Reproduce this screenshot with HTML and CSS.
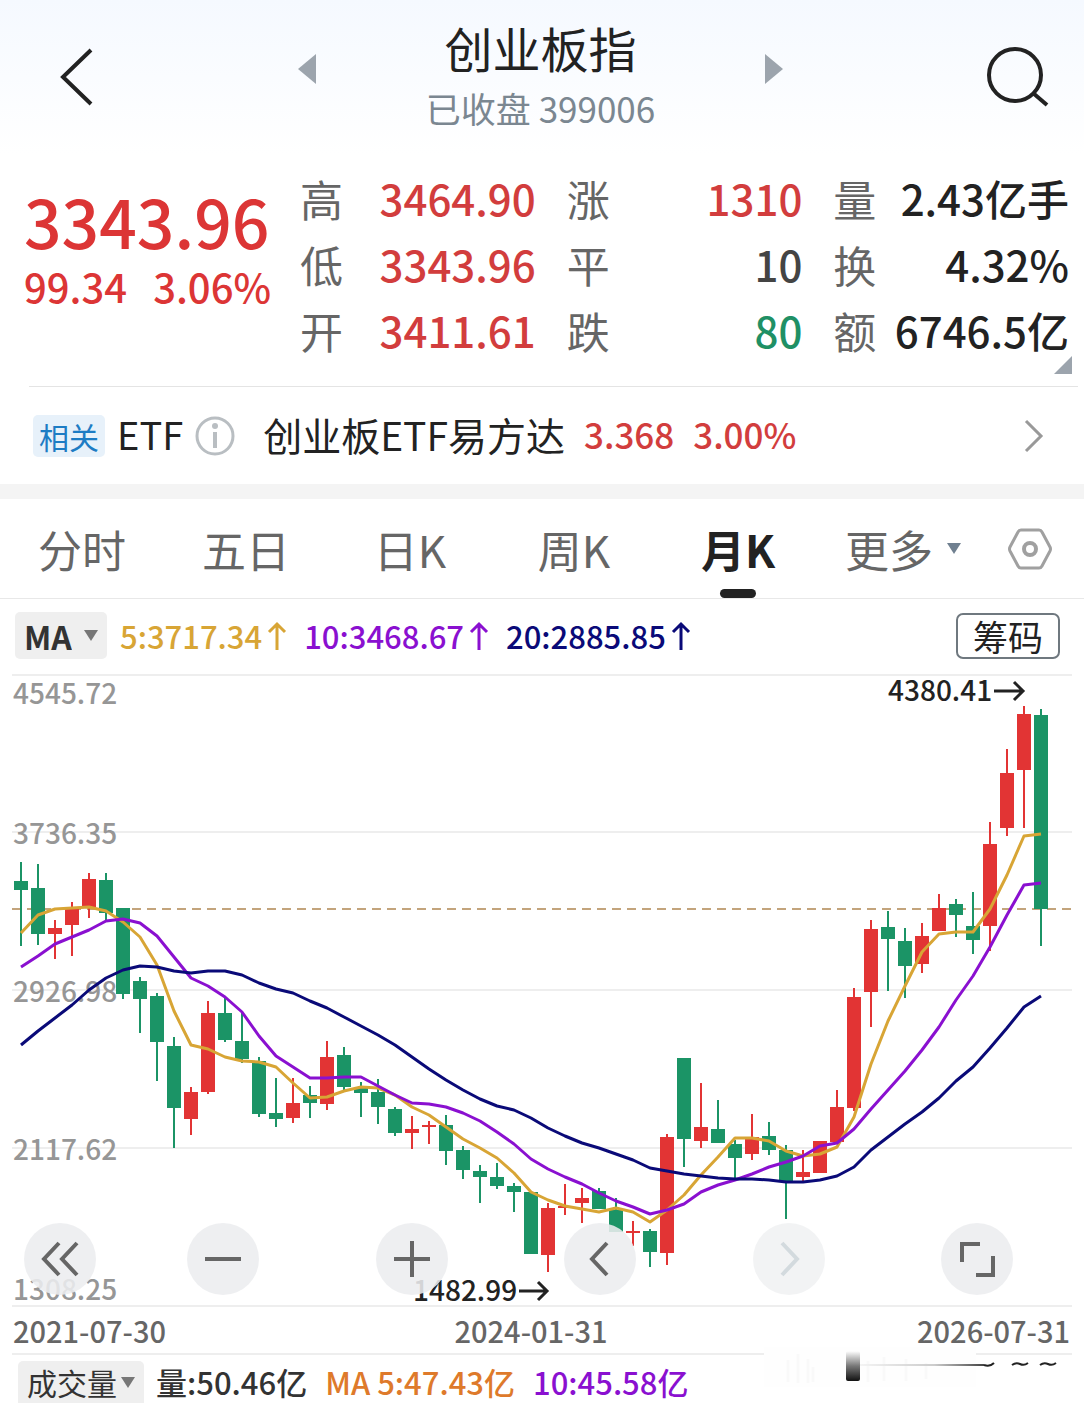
FILE: index.html
```
<!DOCTYPE html>
<html lang="zh-CN">
    <head>
        <meta charset="UTF-8">
        <meta name="viewport" content="width=device-width, initial-scale=1.0">

        <title>创业板指 399006</title>

        <link rel="stylesheet" href="styles.css">
    </head>

    <body>
        <header class="header">
            <button class="icon-btn" aria-label="返回">
                <svg width="34" height="60" viewBox="0 0 34 60"><path d="M31 3L3 30L31 57" fill="none" stroke="#222" stroke-width="4"/></svg>
            </button>
            <div class="switcher">
                <button class="icon-btn arrow" aria-label="上一个">
                    <svg width="18" height="30" viewBox="0 0 18 30"><path d="M18 0V30L0 15Z" fill="#9ca4ad"/></svg>
                </button>
                <div class="title">
                    <h1>创业板指</h1>
                    <p>已收盘 399006</p>
                </div>
                <button class="icon-btn arrow" aria-label="下一个">
                    <svg width="18" height="30" viewBox="0 0 18 30"><path d="M0 0V30L18 15Z" fill="#9ca4ad"/></svg>
                </button>
            </div>
            <button class="icon-btn" aria-label="搜索">
                <svg width="62" height="60" viewBox="0 0 62 60"><g fill="none" stroke="#222" stroke-width="4"><circle cx="28" cy="28" r="26"/><path d="M46 46L60 58"/></g></svg>
            </button>
        </header>

        <section class="quote">
            <div class="price">
                <div class="last">3343.96</div>
                <div class="change"><span>99.34</span><span>3.06%</span></div>
            </div>
            <dl class="stats">
                <div><dt>高</dt><dd class="up">3464.90</dd></div>
                <div><dt>涨</dt><dd class="up">1310</dd></div>
                <div><dt>量</dt><dd>2.43亿手</dd></div>
                <div><dt>低</dt><dd class="up">3343.96</dd></div>
                <div><dt>平</dt><dd class="flat">10</dd></div>
                <div><dt>换</dt><dd>4.32%</dd></div>
                <div><dt>开</dt><dd class="up">3411.61</dd></div>
                <div><dt>跌</dt><dd class="down">80</dd></div>
                <div><dt>额</dt><dd>6746.5亿</dd></div>
            </dl>
            <span class="corner"></span>
        </section>

        <a class="etf" href="#">
            <span class="badge">相关</span>
            <span class="etf-kind">ETF</span>
            <svg class="info" width="40" height="40" viewBox="0 0 40 40"><circle cx="20" cy="20" r="18" fill="none" stroke="#b9bec2" stroke-width="3"/><circle cx="20" cy="10" r="3" fill="#b9bec2"/><path d="M20 16V32" stroke="#b9bec2" stroke-width="4"/></svg>
            <span class="etf-name">创业板ETF易方达</span>
            <span class="etf-num">3.368</span>
            <span class="etf-num">3.00%</span>
            <svg class="go" width="20" height="34" viewBox="0 0 20 34"><path d="M2 2L17 17L2 32" fill="none" stroke="#999" stroke-width="3"/></svg>
        </a>

        <nav class="tabs">
            <button class="tab">分时</button>
            <button class="tab">五日</button>
            <button class="tab">日K</button>
            <button class="tab">周K</button>
            <button class="tab active">月K</button>
            <div class="tab-tools">
                <button class="more">更多<i class="caret blue"></i></button>
                <button class="icon-btn" aria-label="设置">
                    <svg width="46" height="42" viewBox="0 0 46 42"><g fill="none" stroke="#a0a0a0" stroke-width="3"><path d="M14 2H32Q34 2 35 4L43 19Q44 21 43 23L35 38Q34 40 32 40H14Q12 40 11 38L3 23Q2 21 3 19L11 4Q12 2 14 2Z"/><circle cx="23" cy="21" r="6" stroke-width="4"/></g></svg>
                </button>
            </div>
        </nav>

        <div class="ma-bar">
            <label class="picker">
                <select class="bold" aria-label="主图指标"><option>MA</option></select>
                <i class="caret"></i>
            </label>
            <div class="ma-list">
                <span class="ma5">5:3717.34<svg width="20" height="30" viewBox="0 0 20 30"><path d="M10 29V3M2 11L10 3L18 11"/></svg></span>
                <span class="ma10">10:3468.67<svg width="20" height="30" viewBox="0 0 20 30"><path d="M10 29V3M2 11L10 3L18 11"/></svg></span>
                <span class="ma20">20:2885.85<svg width="20" height="30" viewBox="0 0 20 30"><path d="M10 29V3M2 11L10 3L18 11"/></svg></span>
            </div>
            <button class="chips">筹码</button>
        </div>

        <div class="chart">
            <svg id="kline" viewBox="0 674 1084 681"></svg>
            <div class="controls">
                <button class="round" aria-label="最早"><svg width="40" height="40" viewBox="0 0 40 40"><path d="M19 4L4 20L19 36M37 4L22 20L37 36"/></svg></button>
                <div class="control-group">
                    <button class="round" aria-label="缩小"><svg width="40" height="40" viewBox="0 0 40 40"><path d="M2 20H38"/></svg></button>
                    <button class="round" aria-label="放大"><svg width="40" height="40" viewBox="0 0 40 40"><path d="M2 20H38M20 2V38"/></svg></button>
                    <button class="round" aria-label="左移"><svg width="40" height="40" viewBox="0 0 40 40"><path d="M27 4L12 20L27 36"/></svg></button>
                    <button class="round" aria-label="右移" disabled><svg width="40" height="40" viewBox="0 0 40 40"><path d="M13 4L28 20L13 36"/></svg></button>
                    <button class="round" aria-label="全屏"><svg width="40" height="40" viewBox="0 0 40 40"><path d="M5 23V5H23M19 36H36V17"/></svg></button>
                </div>
            </div>
        </div>

        <div class="vol-bar">
            <label class="picker">
                <select aria-label="副图指标"><option>成交量</option></select>
                <i class="caret"></i>
            </label>
            <span class="vol">量:50.46亿</span>
            <span class="vol5">MA 5:47.43亿</span>
            <span class="vol10">10:45.58亿</span>
            <svg class="smudge" width="320" height="44" viewBox="0 0 320 44">
                <defs>
                    <linearGradient id="ink" x1="0" y1="0" x2="0" y2="1"><stop offset="0" stop-color="#fff"/><stop offset="0.5" stop-color="#777"/><stop offset="1" stop-color="#111"/></linearGradient>
                    <linearGradient id="tail"><stop offset="0" stop-color="#f4f4f4"/><stop offset="0.6" stop-color="#ccc"/><stop offset="1" stop-color="#444"/></linearGradient>
                </defs>
                <rect x="8" y="0" width="212" height="40" fill="#fefefe"/>
                <path d="M32 13V35M42 7V36M52 12V36M57 20V35M112 14V35M128 10V34M150 12V34M170 16V32" stroke="#f9f9f9" stroke-width="3"/>
                <rect x="90" y="4" width="14" height="30" rx="2" fill="url(#ink)"/>
                <path d="M104 17H228V19H104Z" fill="url(#tail)"/>
                <path d="M228 18Q234 20 238 16M256 18Q260 15 264 17T272 16M284 18Q288 15 292 17T300 16" fill="none" stroke="#222" stroke-width="2"/>
            </svg>
        </div>

        <script src="kline.js"></script>
    </body>
</html>
```

FILE: styles.css
```
*{
    box-sizing: border-box;
}
body{
    margin: 0;
    background-color: #fff;
    color: #222;
    font-family: "Noto Sans CJK SC", "Noto Sans", sans-serif;
}
button, select{
    font-family: inherit;
    border: none;
    background: none;
    padding: 0;
    margin: 0;
    color: inherit;
    cursor: pointer;
}
h1, p, dl, dd{
    margin: 0;
}
svg{
    display: block;
}
.header{
    display: flex;
    align-items: center;
    justify-content: space-between;
    height: 154px;
    padding: 0 35px 0 60px;
    background: linear-gradient(#f5f9ff, #fff);
}
.switcher{
    display: flex;
    justify-content: space-between;
    align-items: center;
    width: 49%;
    height: 100%;
    padding-bottom: 16px;
}
.title{
    text-align: center;
    padding-top: 16px;
}
.title h1{
    font-size: 48px;
    line-height: 62px;
    font-weight: 400;
}
.title p{
    font-size: 35px;
    line-height: 60px;
    color: #7b8791;
}
.quote{
    position: relative;
    display: flex;
    padding: 11px 15px 23px 24px;
}
.price{
    flex: 0 0 276px;
    padding-top: 16px;
    color: #dc3535;
    font-weight: 500;
}
.last{
    font-size: 66px;
    line-height: 78px;
}
.change{
    display: flex;
    gap: 26px;
    font-size: 40px;
    line-height: 54px;
}
.stats{
    flex: 1;
    display: grid;
    grid-template-columns: repeat(3, 1fr);
    column-gap: 31px;
    font-size: 43px;
    line-height: 66px;
}
.stats div{
    display: flex;
    justify-content: space-between;
}
.stats dt{
    color: #666;
}
.stats dd{
    font-size: 42px;
    font-weight: 500;
    white-space: nowrap;
}
.stats .up{
    color: #d23d3d;
}
.stats .flat{
    color: #444;
}
.stats .down{
    color: #1f9065;
}
.corner{
    position: absolute;
    right: 12px;
    bottom: 12px;
    border-left: 18px solid transparent;
    border-bottom: 18px solid #9ca4ad;
}
.etf{
    display: flex;
    align-items: center;
    height: 98px;
    margin-left: 29px;
    margin-right: 6px;
    padding: 0 34px 0 4px;
    border-top: 1px solid #e4e4e4;
    color: #222;
    font-size: 38px;
    line-height: 56px;
    text-decoration: none;
    white-space: nowrap;
}
.badge{
    padding: 0 6px;
    border-radius: 5px;
    background-color: #e7f1fa;
    color: #1d7cc4;
    font-size: 30px;
    line-height: 42px;
}
.etf-kind{
    margin-left: 12px;
}
.etf-kind, .etf-name, .etf-num{
    padding-bottom: 4px;
}
.info{
    margin-left: 12px;
    margin-right: 28px;
}
.etf-name{
    font-size: 39px;
}
.etf-num{
    margin-left: 19px;
    color: #d23d3d;
    font-size: 35px;
    font-weight: 500;
}
.go{
    margin-left: auto;
}
.tabs{
    display: flex;
    height: 115px;
    border-top: 15px solid #f4f4f4;
    border-bottom: 1px solid #e8e8e8;
    font-size: 44px;
    color: #666;
}
.tab{
    flex: 1;
    position: relative;
    font-size: 44px;
}
.tab.active{
    color: #222;
    font-weight: 700;
}
.tab.active::after{
    content: "";
    position: absolute;
    left: 50%;
    bottom: 0;
    width: 36px;
    height: 9px;
    margin-left: -18px;
    border-radius: 5px;
    background-color: #222;
}
.tab-tools{
    flex: 0 0 264px;
    display: flex;
    align-items: center;
    justify-content: space-between;
    padding: 0 31px 0 25px;
}
.more{
    display: flex;
    align-items: center;
    gap: 14px;
    font-size: 44px;
}
.caret{
    border: 7px solid transparent;
    border-top: 11px solid #777;
    border-bottom: none;
}
.caret.blue{
    border-top-color: #708090;
}
.ma-bar{
    display: flex;
    align-items: center;
    height: 75px;
    padding: 0 24px 2px 15px;
}
.picker{
    display: flex;
    align-items: center;
    gap: 12px;
    height: 47px;
    padding: 0 9px;
    border-radius: 5px;
    background-color: #efefef;
    color: #333;
}
.picker select{
    appearance: none;
    font-size: 30px;
    line-height: 42px;
}
.picker .bold{
    font-size: 32px;
    font-weight: 700;
}
.ma-list{
    display: flex;
    gap: 17px;
    margin-left: 13px;
    font-size: 31px;
    line-height: 46px;
    font-weight: 500;
}
.ma-list span{
    display: flex;
    align-items: center;
    gap: 5px;
}
.ma-list path{
    fill: none;
    stroke: currentColor;
    stroke-width: 3;
}
.ma5{
    color: #d8a535;
}
.ma10{
    color: #8a10d0;
}
.ma20{
    color: #0a0a78;
}
.chips{
    margin-left: auto;
    width: 104px;
    height: 46px;
    border: 2px solid #6f787f;
    border-radius: 7px;
    font-size: 35px;
    line-height: 42px;
}
.chart{
    position: relative;
}
#kline{
    width: 100%;
    overflow: visible;
    font-size: 28px;
    font-weight: 500;
}
.grid{
    stroke: #eee;
    stroke-width: 2;
}
.axis{
    fill: #969696;
}
.date{
    fill: #666;
    font-size: 29px;
}
.mark{
    fill: #222;
}
.mark-arrow{
    fill: none;
    stroke: #222;
    stroke-width: 3;
}
.now{
    stroke: #c3a47c;
    stroke-width: 2;
    stroke-dasharray: 9 6;
}
.rise{
    fill: #e23434;
}
.fall{
    fill: #1b9466;
}
.line{
    fill: none;
    stroke: currentColor;
    stroke-width: 3;
    stroke-linejoin: round;
}
.controls{
    position: absolute;
    left: 0;
    right: 0;
    bottom: 60px;
    display: flex;
    gap: 91px;
    padding: 0 71px 0 24px;
}
.control-group{
    flex: 1;
    display: flex;
    justify-content: space-between;
}
.round{
    display: flex;
    align-items: center;
    justify-content: center;
    width: 72px;
    height: 72px;
    border-radius: 50%;
    background-color: rgba(236, 237, 239, 0.88);
}
.round path{
    fill: none;
    stroke: #666;
    stroke-width: 4;
}
.round:disabled{
    background-color: rgba(240, 241, 243, 0.88);
}
.round:disabled path{
    stroke: #d3dade;
}
.vol-bar{
    position: relative;
    display: flex;
    align-items: center;
    height: 48px;
    padding: 6px 18px 0;
    font-size: 31px;
    line-height: 42px;
    font-weight: 500;
    white-space: nowrap;
}
.vol-bar .picker{
    gap: 4px;
    height: 42px;
    border-radius: 5px 5px 0 0;
}
.vol{
    margin-left: 12px;
    color: #333;
}
.vol5{
    margin-left: 18px;
    color: #de7a2b;
}
.vol10{
    margin-left: 18px;
    color: #8a10d0;
}
.smudge{
    position: absolute;
    right: 8px;
    top: -8px;
}
```

FILE: kline.js
```
// high, body top, body bottom, low, r = rise / g = fall
const candles = [
    [862, 881, 890, 946, 'g'], [864, 888, 934, 945, 'g'], [920, 928, 934, 959, 'r'], [902, 908, 925, 956, 'r'],
    [873, 879, 908, 918, 'r'], [873, 880, 913, 920, 'g'], [908, 908, 994, 999, 'g'], [977, 981, 999, 1033, 'g'],
    [993, 996, 1042, 1081, 'g'], [1037, 1046, 1108, 1148, 'g'], [1087, 1092, 1119, 1135, 'r'], [1001, 1013, 1092, 1094, 'r'],
    [997, 1013, 1040, 1042, 'g'], [1012, 1041, 1059, 1063, 'g'], [1057, 1061, 1114, 1117, 'g'], [1078, 1113, 1119, 1127, 'g'],
    [1078, 1103, 1118, 1123, 'r'], [1086, 1095, 1103, 1118, 'g'], [1041, 1057, 1104, 1110, 'r'], [1047, 1055, 1087, 1091, 'g'],
    [1082, 1088, 1093, 1117, 'g'], [1079, 1092, 1107, 1124, 'g'], [1107, 1109, 1133, 1136, 'g'], [1116, 1129, 1133, 1149, 'r'],
    [1121, 1125, 1127, 1144, 'r'], [1115, 1125, 1151, 1165, 'g'], [1146, 1150, 1170, 1179, 'g'], [1165, 1171, 1177, 1203, 'g'],
    [1163, 1177, 1186, 1189, 'g'], [1183, 1186, 1192, 1212, 'g'], [1192, 1192, 1254, 1254, 'g'], [1203, 1208, 1255, 1272, 'r'],
    [1184, 1206, 1208, 1215, 'r'], [1188, 1198, 1203, 1223, 'r'], [1188, 1191, 1209, 1209, 'g'], [1198, 1210, 1232, 1232, 'g'],
    [1221, 1231, 1233, 1246, 'r'], [1229, 1231, 1252, 1267, 'g'], [1134, 1137, 1253, 1265, 'r'], [1058, 1058, 1139, 1167, 'g'],
    [1083, 1127, 1141, 1148, 'r'], [1100, 1129, 1143, 1143, 'g'], [1140, 1144, 1158, 1178, 'g'], [1114, 1137, 1154, 1160, 'r'],
    [1122, 1136, 1150, 1155, 'g'], [1145, 1150, 1181, 1219, 'g'], [1150, 1172, 1177, 1183, 'r'], [1141, 1141, 1173, 1173, 'r'],
    [1090, 1107, 1142, 1142, 'r'], [988, 997, 1108, 1111, 'r'], [920, 929, 992, 1027, 'r'], [911, 927, 939, 991, 'g'],
    [928, 941, 966, 998, 'g'], [923, 936, 964, 973, 'r'], [894, 908, 931, 931, 'r'], [899, 904, 915, 937, 'g'],
    [892, 926, 940, 954, 'g'], [822, 844, 926, 951, 'r'], [749, 773, 828, 836, 'r'], [706, 714, 770, 828, 'r'],
    [709, 715, 909, 946, 'g']
];

const averages = {
    ma5: [933, 915, 909, 908, 907, 911, 922, 937, 965, 1011, 1045, 1049, 1057, 1061, 1062, 1067, 1083, 1098, 1097, 1091,
        1087, 1088, 1095, 1107, 1115, 1127, 1139, 1148, 1158, 1173, 1192, 1200, 1206, 1209, 1212, 1208, 1212, 1222, 1210, 1195,
        1175, 1157, 1138, 1138, 1141, 1151, 1156, 1154, 1147, 1117, 1064, 1021, 986, 952, 934, 932, 932, 909, 875, 836, 834],
    ma10: [967, 956, 944, 937, 930, 921, 919, 923, 936, 957, 978, 986, 997, 1012, 1036, 1056, 1067, 1078, 1078, 1077,
        1077, 1086, 1095, 1103, 1104, 1107, 1113, 1121, 1132, 1144, 1159, 1169, 1177, 1184, 1193, 1201, 1207, 1214, 1210, 1204,
        1192, 1185, 1180, 1174, 1167, 1162, 1156, 1146, 1143, 1129, 1109, 1090, 1071, 1050, 1027, 1000, 976, 947, 915, 885, 883],
    ma20: [1045, 1031, 1018, 1005, 990, 978, 970, 966, 967, 971, 973, 971, 971, 975, 983, 989, 993, 1001, 1008, 1017,
        1026, 1035, 1045, 1057, 1069, 1080, 1090, 1099, 1106, 1110, 1118, 1128, 1136, 1143, 1148, 1154, 1160, 1168, 1171, 1174,
        1176, 1178, 1179, 1179, 1180, 1182, 1182, 1180, 1176, 1167, 1150, 1137, 1124, 1112, 1098, 1081, 1067, 1048, 1028, 1007, 996]
};

const step = 17;
const left = 21;
let out = '';

// grid and axis
[675, 832, 990, 1148, 1306, 1354].forEach(y => {
    out += `<path class="grid" d="M12 ${y}H1072"/>`;
});
[['4545.72', 704], ['3736.35', 844], ['2926.98', 1002], ['2117.62', 1160], ['1308.25', 1300]].forEach(([t, y]) => {
    out += `<text class="axis" x="13" y="${y}">${t}</text>`;
});
out += '<text class="date" x="13" y="1343">2021-07-30</text>';
out += '<text class="date" x="531" y="1343" text-anchor="middle">2024-01-31</text>';
out += '<text class="date" x="1070" y="1343" text-anchor="end">2026-07-31</text>';
out += '<path class="now" d="M12 909H1072"/>';

candles.forEach(([high, top, bottom, low, type], i) => {
    const x = left + i * step;
    const name = type == 'r' ? 'rise' : 'fall';
    out += `<rect class="${name}" x="${x - 1}" y="${high}" width="2" height="${low - high}"/>`;
    out += `<rect class="${name}" x="${x - 7}" y="${top}" width="14" height="${bottom - top}"/>`;
});

for(const name in averages){
    const points = averages[name].map((y, i) => `${left + i * step},${y}`).join(' ');
    out += `<polyline class="line ${name}" points="${points}"/>`;
}

// highest and lowest price
out += '<text class="mark" x="888" y="701">4380.41</text><path class="mark-arrow" d="M994 691H1023M1014 682L1023 691L1014 700"/>';
out += '<text class="mark" x="413" y="1301">1482.99</text><path class="mark-arrow" d="M519 1291H547M538 1282L547 1291L538 1300"/>';

document.querySelector('#kline').innerHTML = out;
```
